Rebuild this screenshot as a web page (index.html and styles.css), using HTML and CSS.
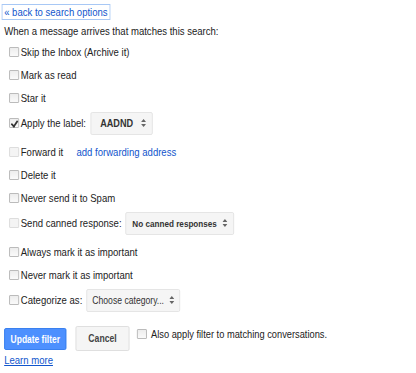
FILE: index.html
```html
<!DOCTYPE html>
<html lang="en">
<head>
    <meta charset="UTF-8">
    <title>Filter actions</title>
    <link rel="stylesheet" href="styles.css">
</head>
<body>
<div class="page">
    <div class="back-row"><a class="back-link" href="#">&laquo; back to search options</a></div>
    <div class="intro">When a message arrives that matches this search:</div>

    <div class="row"><input type="checkbox"><span>Skip the Inbox (Archive it)</span></div>
    <div class="row"><input type="checkbox"><span>Mark as read</span></div>
    <div class="row"><input type="checkbox"><span>Star it</span></div>
    <div class="row tall"><input type="checkbox" checked><span>Apply the label:</span><span class="fake-select label-select">AADND<svg class="arrows" width="6" height="8" viewBox="0 0 6 8"><path d="M3 0L6 3H0Z M3 8L6 5H0Z" fill="#666"/></svg></span></div>
    <div class="row"><input type="checkbox" disabled><span>Forward it</span><a class="inline-link" href="#">add forwarding address</a></div>
    <div class="row"><input type="checkbox"><span>Delete it</span></div>
    <div class="row"><input type="checkbox"><span>Never send it to Spam</span></div>
    <div class="row tall"><input type="checkbox" disabled><span>Send canned response:</span><span class="fake-select canned-select">No canned responses<svg class="arrows" width="6" height="8" viewBox="0 0 6 8"><path d="M3 0L6 3H0Z M3 8L6 5H0Z" fill="#666"/></svg></span></div>
    <div class="row"><input type="checkbox"><span>Always mark it as important</span></div>
    <div class="row"><input type="checkbox"><span>Never mark it as important</span></div>
    <div class="row tall"><input type="checkbox"><span>Categorize as:</span><span class="fake-select cat-select">Choose category...<svg class="arrows" width="6" height="8" viewBox="0 0 6 8"><path d="M3 0L6 3H0Z M3 8L6 5H0Z" fill="#666"/></svg></span></div>

    <div class="actions">
        <button class="update-btn">Update filter</button>
        <button class="cancel-btn">Cancel</button>
        <label class="also"><input type="checkbox"><span>Also apply filter to matching conversations.</span></label>
    </div>
    <a class="learn" href="#">Learn more</a>
</div>
</body>
</html>
```
FILE: styles.css
```css
body { margin: 0; overflow: hidden; font-family: Arial, "Liberation Sans", sans-serif; font-size: 11.5px; color: #222; background: #fff; }
/* the screenshot is squeezed sideways, so the whole page is too */
.page { box-sizing: border-box; width: 410px; padding: 4px 0 0 5px; transform: scaleX(0.83); transform-origin: 0 0; }
a { color: #15c; }
.back-row { height: 17px; }
.back-link { display: inline-block; padding: 0 2px; margin-left: -3px; line-height: 14px; text-decoration: none; border: 1px solid #a8c8f5; }
.intro { height: 19px; line-height: 20px; }
.row { display: flex; align-items: center; height: 23px; padding-left: 6px; white-space: nowrap; }
.row.tall { height: 28px; padding-bottom: 3px; }
input[type="checkbox"] { appearance: none; -webkit-appearance: none; position: relative; width: 12px; height: 10px; margin: 0 2px 0 0; border: 1px solid #b5b5b5; border-radius: 1px; background: linear-gradient(#ededed, #fafafa); flex: none; }
input[type="checkbox"]:disabled { border-color: #dadada; background: #f4f4f4; }
input[type="checkbox"]:checked::after { content: ""; position: absolute; left: 3px; top: 0; width: 3px; height: 6px; border: solid #333; border-width: 0 2px 2px 0; transform: rotate(40deg); }
.inline-link { margin-left: 16px; text-decoration: none; }
.fake-select { display: inline-flex; align-items: center; justify-content: space-between; box-sizing: border-box; height: 23px; margin-left: 5px; padding: 0 7px 0 8px; background: #f5f5f5; border: 1px solid #e2e2e2; border-radius: 2px; font-size: 11px; font-weight: bold; color: #333; white-space: nowrap; }
.arrows { margin-left: 5px; flex: none; }
.label-select { width: 75px; padding-left: 11px; }
.canned-select { width: 131px; font-size: 9.8px; padding-left: 7px; }
.cat-select { width: 113px; font-weight: normal; font-size: 10.4px; padding-left: 6px; padding-right: 6px; }
.actions { display: flex; align-items: flex-start; margin-top: 9px; height: 27px; }
button { font-family: inherit; font-weight: bold; border-radius: 2px; cursor: pointer; padding: 0; white-space: nowrap; }
.update-btn { margin-top: 2px; width: 75px; height: 22px; font-size: 10.2px; background: #4d90fe; color: #fff; border: 1px solid #3079ed; }
.cancel-btn { margin-left: 11px; width: 65px; height: 25px; font-size: 10.4px; background: #f5f5f5; color: #444; border: 1px solid #dcdcdc; }
.also { display: flex; align-items: center; margin-left: 9px; margin-top: 2px; white-space: nowrap; font-size: 11.2px; }
.also input[type="checkbox"] { margin-right: 5px; }
.learn { display: inline-block; margin-top: 1px; line-height: 13px; }
```
